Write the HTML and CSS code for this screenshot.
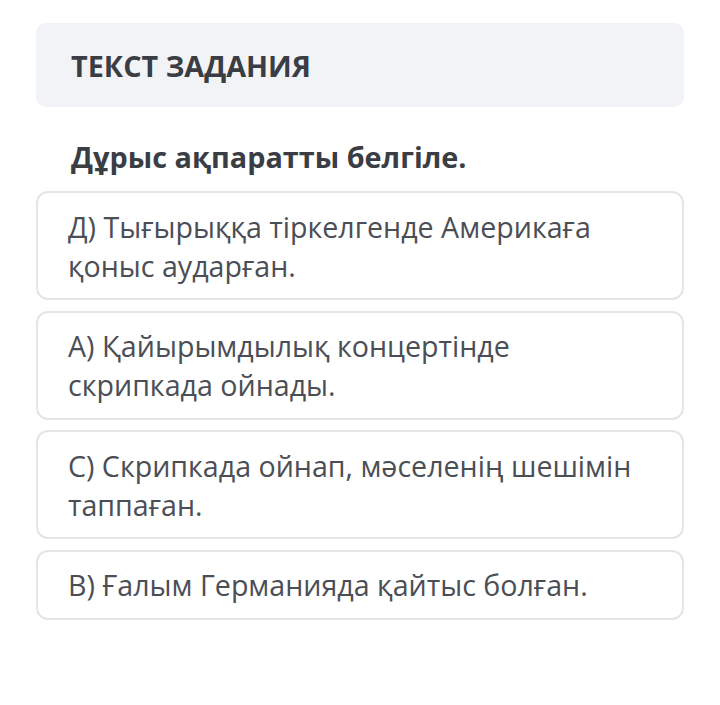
FILE: index.html
```html
<!DOCTYPE html>
<html lang="kk">
<head>
<meta charset="utf-8">
<link rel="stylesheet" href="styles.css">
</head>
<body>
<div class="page">
  <div class="header">ТЕКСТ ЗАДАНИЯ</div>
  <div class="question">Дұрыс ақпаратты белгіле.</div>
  <div class="options">
    <div class="option">Д) Тығырыққа тіркелгенде Америкаға қоныс аударған.</div>
    <div class="option">А) Қайырымдылық концертінде скрипкада ойнады.</div>
    <div class="option">С) Скрипкада ойнап, мәселенің шешімін таппаған.</div>
    <div class="option">В) Ғалым Германияда қайтыс болған.</div>
  </div>
</div>
</body>
</html>
```
FILE: styles.css
```css
html, body {
  margin: 0;
  padding: 0;
  background: #ffffff;
}
body {
  font-family: "Open Sans", "Noto Sans", sans-serif;
  color: #45484f;
}
.page {
  padding: 23px 36px 0 36px;
}
.header {
  background: #f2f3f6;
  border-radius: 10px;
  height: 84px;
  display: flex;
  align-items: center;
  padding-left: 35px;
  font-size: 28.8px;
  font-weight: 700;
  color: #3a3d44;
}
.question {
  padding: 32px 0 0 35px;
  height: 52px;
  font-size: 28.8px;
  font-weight: 700;
  color: #3a3d44;
  line-height: 36px;
}
.options {
  display: flex;
  flex-direction: column;
  gap: 10.5px;
}
.option {
  border: 2px solid #e3e5e8;
  border-radius: 12px;
  padding: 13.5px 40px 13.5px 30px;
  font-size: 28.6px;
  line-height: 39px;
  color: #4b4e55;
}
```
